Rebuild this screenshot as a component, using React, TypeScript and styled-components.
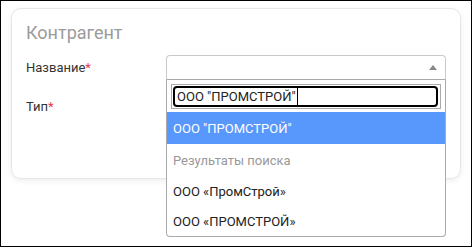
import React from "react";
import styled, { createGlobalStyle } from "styled-components";

const Global = createGlobalStyle`
  html, body { margin: 0; padding: 0; background: #fff; }
  body { font-family: Roboto, "Noto Sans", Arial, sans-serif; }
  * { box-sizing: border-box; }
`;

const Frame = styled.div`
  width: 472px;
  height: 247px;
  border: 1px solid #000;
  background: #fff;
  padding: 7px 0 0 10px;
  overflow: hidden;
`;

const Card = styled.section`
  width: 450px;
  height: 171px;
  border: 1px solid #e6e6e6;
  border-radius: 10px;
  box-shadow: 0 2px 6px rgba(0, 0, 0, 0.07);
  padding: 13px 13px 0 14px;
  display: flex;
  flex-direction: column;
  gap: 12px;
`;

const Title = styled.h2`
  margin: 0;
  font-size: 18px;
  line-height: 21px;
  font-weight: 400;
  color: #9b9b9b;
`;

const Form = styled.div`
  display: grid;
  grid-template-columns: 140px 280px;
  row-gap: 14px;
  align-items: center;
`;

const Label = styled.label`
  font-size: 13px;
  line-height: 16px;
  color: #333;
`;

const Required = styled.span`
  color: #e8384f;
`;

const SelectWrap = styled.div`
  position: relative;
  height: 25px;
`;

const SelectBox = styled.div<{ $open?: boolean }>`
  height: 25px;
  border: 1px solid #c9c9c9;
  border-radius: ${(p) => (p.$open ? "4px 4px 0 0" : "4px")};
  border-bottom-color: #aaa;
  background: #fff;
  display: flex;
  align-items: center;
  justify-content: flex-end;
  padding-right: 8px;
`;

const Arrow = styled.span<{ $up?: boolean }>`
  width: 0;
  height: 0;
  border-left: 4px solid transparent;
  border-right: 4px solid transparent;
  ${(p) =>
    p.$up ? "border-bottom: 5px solid #888;" : "border-top: 5px solid #888;"}
`;

const Dropdown = styled.div`
  position: absolute;
  top: 25px;
  left: 0;
  width: 280px;
  border: 1px solid #aaa;
  border-top: none;
  border-radius: 0 0 4px 4px;
  background: #fff;
  z-index: 10;
`;

const SearchArea = styled.div`
  padding: 4px 4px 3px 4px;
`;

const SearchField = styled.div`
  height: 25px;
  border: 1px solid #aaa;
  padding: 1px 2px 1px 1px;
`;

const SearchRing = styled.div`
  height: 100%;
  border: 2px solid #000;
  border-radius: 4px;
  display: flex;
  align-items: center;
  padding-left: 2px;
  font-size: 13px;
  color: #222;
  white-space: nowrap;
`;

const Caret = styled.span`
  display: inline-block;
  width: 1px;
  height: 17px;
  background: #000;
  margin-left: 1px;
`;

const Option = styled.div<{ $active?: boolean; $h: number }>`
  height: ${(p) => p.$h}px;
  display: flex;
  align-items: center;
  padding-left: 6px;
  font-size: 13px;
  color: ${(p) => (p.$active ? "#fff" : "#222")};
  background: ${(p) => (p.$active ? "#5897fb" : "transparent")};
`;

const GroupLabel = styled.div`
  height: 32px;
  display: flex;
  align-items: center;
  padding-left: 6px;
  font-size: 13px;
  color: #999;
`;

export default function App() {
  return (
    <>
      <Global />
      <Frame>
        <Card>
          <Title>Контрагент</Title>
          <Form>
            <Label>
              Название<Required>*</Required>
            </Label>
            <SelectWrap>
              <SelectBox $open>
                <Arrow $up />
              </SelectBox>
              <Dropdown>
                <SearchArea>
                  <SearchField>
                    <SearchRing>
                      ООО "ПРОМСТРОЙ"
                      <Caret />
                    </SearchRing>
                  </SearchField>
                </SearchArea>
                <Option $active $h={32}>ООО "ПРОМСТРОЙ"</Option>
                <GroupLabel>Результаты поиска</GroupLabel>
                <Option $h={30}>ООО «ПромСтрой»</Option>
                <Option $h={30}>ООО «ПРОМСТРОЙ»</Option>
              </Dropdown>
            </SelectWrap>
            <Label>
              Тип<Required>*</Required>
            </Label>
            <SelectWrap>
              <SelectBox>
                <Arrow />
              </SelectBox>
            </SelectWrap>
          </Form>
        </Card>
      </Frame>
    </>
  );
}
